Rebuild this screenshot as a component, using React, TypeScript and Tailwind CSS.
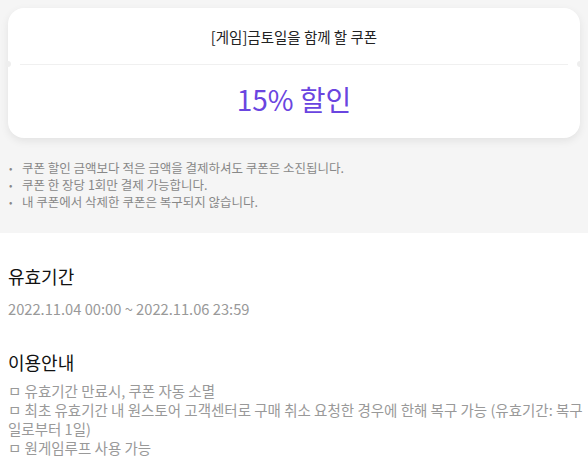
import React from "react";

export default function App() {
  const font = { fontFamily: '"Noto Sans CJK KR", "Noto Sans", sans-serif' };
  return (
    <div className="w-[588px] h-[472px] overflow-hidden bg-white" style={font}>
      <div className="bg-[#f5f5f5] pt-[8px] pb-[23px] px-[8px]">
        <div className="relative bg-white rounded-[16px] shadow-[0_3px_8px_rgba(0,0,0,0.08)] h-[130px] flex flex-col">
          <div className="h-[56px] flex items-center justify-center text-[14.5px] text-[#222] pt-[1px]">
            [게임]금토일을 함께 할 쿠폰
          </div>
          <div className="mx-[12px] h-[1px] bg-[#f0f0f0]" />
          <div className="flex-1 flex items-center justify-center text-[28px] text-[#6a45e0] pb-[6px]">
            15% 할인
          </div>
          <div className="absolute left-[-3px] top-[53px] w-[6px] h-[6px] rounded-full bg-[#eeeeee]" />
          <div className="absolute right-[-3px] top-[53px] w-[6px] h-[6px] rounded-full bg-[#eeeeee]" />
        </div>
        <ul className="mt-[21px] text-[12.5px] leading-[17px] text-[#888] pl-[1px]">
          <li className="flex items-center h-[17px]"><span className="w-[13px] text-[10px] leading-[17px]">•</span><span>쿠폰 할인 금액보다 적은 금액을 결제하셔도 쿠폰은 소진됩니다.</span></li>
          <li className="flex items-center h-[17px]"><span className="w-[13px] text-[10px] leading-[17px]">•</span><span>쿠폰 한 장당 1회만 결제 가능합니다.</span></li>
          <li className="flex items-center h-[17px]"><span className="w-[13px] text-[10px] leading-[17px]">•</span><span>내 쿠폰에서 삭제한 쿠폰은 복구되지 않습니다.</span></li>
        </ul>
      </div>
      <div className="pl-[8px] pr-[4px] pt-[29px]">
        <div className="text-[18px] leading-[28px] text-[#111]">유효기간</div>
        <div className="mt-[9px] text-[14.7px] leading-[20px] text-[#999]">2022.11.04 00:00 ~ 2022.11.06 23:59</div>
        <div className="mt-[29px] text-[18px] leading-[28px] text-[#111]">이용안내</div>
        <div className="mt-[5px] text-[14.5px] leading-[19px] text-[#999] break-all">
          <div>ㅁ 유효기간 만료시, 쿠폰 자동 소멸</div>
          <div>ㅁ 최초 유효기간 내 원스토어 고객센터로 구매 취소 요청한 경우에 한해 복구 가능 (유효기간: 복구일로부터 1일)</div>
          <div>ㅁ 원게임루프 사용 가능</div>
        </div>
      </div>
    </div>
  );
}
